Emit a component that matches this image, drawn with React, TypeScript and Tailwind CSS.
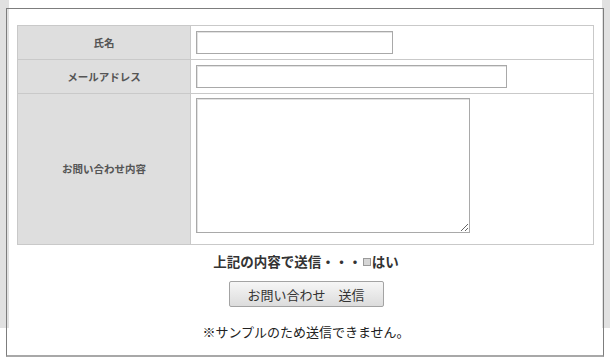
import { useState } from 'react';

// お問い合わせフォーム（サンプル）
const rows = [
  { label: '氏名', kind: 'short' },
  { label: 'メールアドレス', kind: 'long' },
  { label: 'お問い合わせ内容', kind: 'area' },
];

export default function App() {
  const [agree, setAgree] = useState(false);

  return (
    <div
      className="w-[610px] h-[357px] overflow-hidden pl-[6px] pt-[8px] pr-[6px] bg-no-repeat bg-[length:100%_328px] bg-[linear-gradient(to_right,#e1e1e1_9px,#ffffff_9px,#ffffff_602px,#e1e1e1_602px)]"
      style={{ fontFamily: '"Noto Sans CJK JP", "Noto Sans", sans-serif' }}
    >
      <div className="w-[598px] h-[349px] border border-[#7d7d7d] border-b-2 border-b-[#a8a8a8] pl-[10px] pr-[8px] pt-[16px]">
        <table className="w-[577px] border-collapse border border-[#c9c9c9]">
          <tbody>
            {rows.map((r) => (
              <tr
                key={r.label}
                className={r.kind === 'area' ? 'h-[151px]' : 'h-[34px]'}
              >
                <th className="w-[173px] bg-[#dedede] border border-[#c9c9c9] text-[10.5px] font-bold text-[#555] text-center p-0">
                  {r.label}
                </th>
                <td className="border border-[#c9c9c9] bg-white pl-[5px] p-0 align-middle">
                  {r.kind === 'area' ? (
                    <textarea className="block w-[274px] h-[135px] mt-[4px] mb-[11px] border border-[#a9a9a9] shadow-[inset_1px_1px_0_#e2e2e2] bg-white" />
                  ) : (
                    <input
                      type="text"
                      className={`block h-[23px] border border-[#a9a9a9] shadow-[inset_1px_1px_0_#e2e2e2] bg-white ${
                        r.kind === 'short' ? 'w-[197px]' : 'w-[311px]'
                      }`}
                    />
                  )}
                </td>
              </tr>
            ))}
          </tbody>
        </table>

        <div className="flex flex-col items-center">
          <p className="mt-[8px] h-[18px] flex items-center text-[13.5px] leading-none font-bold text-[#333]">
            上記の内容で送信・・・
            <span
              onClick={() => setAgree(!agree)}
              className={`inline-block w-[8px] h-[8px] border border-[#9a9a9a] mx-[1px] ${
                agree ? 'bg-[#555]' : 'bg-[#d6d6d6]'
              }`}
            />
            はい
          </p>
          <button className="mt-[10px] w-[155px] h-[26px] border border-[#a3a3a3] rounded-[2px] bg-[linear-gradient(#f6f6f6,#dcdcdc)] text-[13px] leading-none text-[#333]">
            お問い合わせ　送信
          </button>
          <p className="mt-[18px] text-[13px] leading-none text-[#222]">
            ※サンプルのため送信できません。
          </p>
        </div>
      </div>
    </div>
  );
}
